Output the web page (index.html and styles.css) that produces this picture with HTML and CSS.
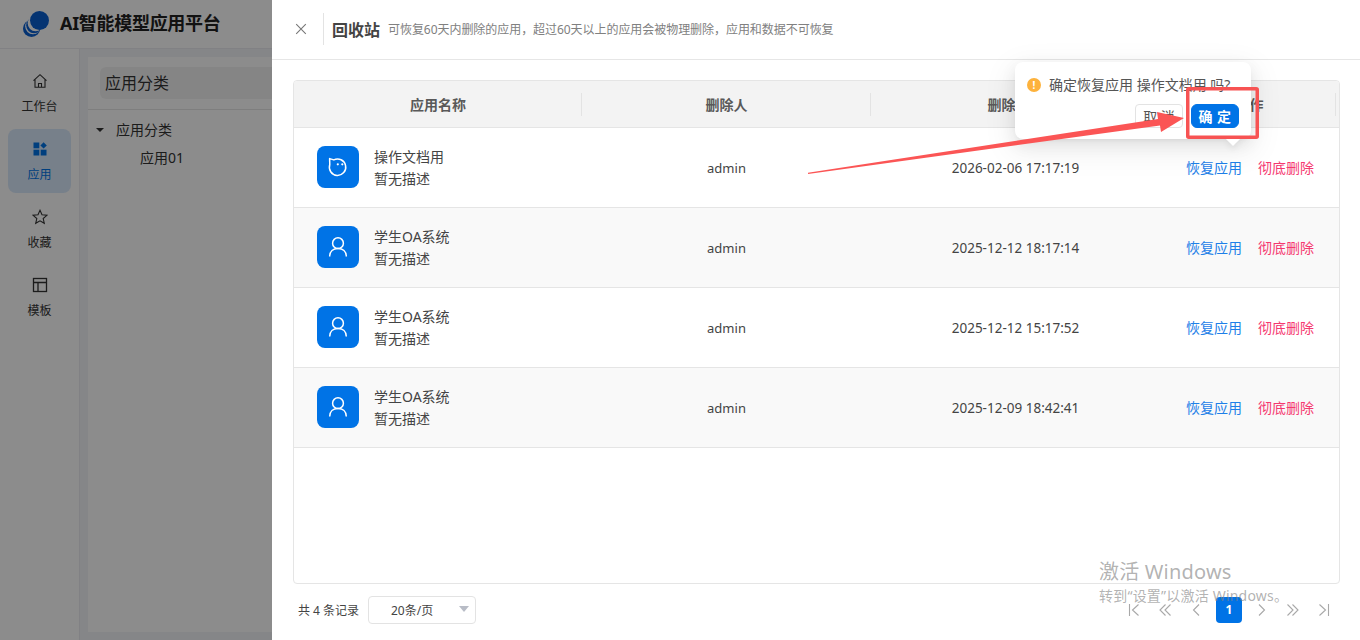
FILE: index.html
```html
<!DOCTYPE html>
<html lang="zh-CN">
<head>
<meta charset="utf-8">
<title>回收站</title>
<link rel="stylesheet" href="styles.css">
</head>
<body>
<div class="app">
  <header class="topbar">
    <svg class="logo" viewBox="0 0 26 26"><circle cx="8.500" cy="17.500" r="8.500" fill="#0a5fd0"/><circle cx="10" cy="15.500" r="7.800" fill="#fff"/><circle cx="11" cy="14.500" r="7.800" fill="#0a5fd0"/><circle cx="12.500" cy="12.500" r="7.800" fill="#fff"/><circle cx="16.500" cy="9.500" r="9.500" fill="#0a5fd0"/></svg>
    <span class="brand">AI智能模型应用平台</span>
  </header>
  <div class="body">
    <nav class="sidenav">
      <a class="navitem">
        <svg class="navicon" viewBox="0 0 16 16" fill="none" stroke="#333" stroke-width="1.1"><path d="M1.5 7.6 8 1.7l6.5 5.9M3 6.5v7.8h10V6.5M6.500 14.300v-3.800h3v3.800"/></svg>
        <span>工作台</span>
      </a>
      <a class="navitem active">
        <svg class="navicon" viewBox="0 0 16 16" fill="#0073e6"><rect x="1.5" y="1.5" width="5.8" height="5.8"/><path d="M11.6 1.2l3.2 3.2-3.2 3.2-3.2-3.2z"/><rect x="1.5" y="8.7" width="5.8" height="5.8"/><rect x="8.7" y="8.7" width="5.8" height="5.8"/></svg>
        <span>应用</span>
      </a>
      <a class="navitem">
        <svg class="navicon" viewBox="0 0 16 16" fill="none" stroke="#333" stroke-width="1.1"><path d="M8 1.3l2 4.5 4.9.5-3.7 3.2 1.100 4.800L8 11.800l-4.300 2.500 1.100-4.800L1.100 6.300 6 5.800z"/></svg>
        <span>收藏</span>
      </a>
      <a class="navitem">
        <svg class="navicon" viewBox="0 0 16 16" fill="none" stroke="#333" stroke-width="1.3"><rect x="1.5" y="1.5" width="13" height="13"/><path d="M1.5 5.5h13M6 5.5v9"/></svg>
        <span>模板</span>
      </a>
    </nav>
    <main class="content">
      <section class="card">
        <div class="cardhead"><div class="cardtitle">应用分类</div></div>
        <div class="tree">
          <div class="treenode"><i class="caret"></i>应用分类</div>
          <div class="treeleaf">应用01</div>
        </div>
      </section>
    </main>
  </div>
</div>

<div class="mask"></div>

<aside class="drawer">
  <div class="drawerhead">
    <svg class="close" viewBox="0 0 12 12" fill="none" stroke="#777" stroke-width="1.1"><path d="M1.2 1.2l9.6 9.6M10.8 1.2l-9.6 9.6"/></svg>
    <i class="vline"></i>
    <h2 class="title">回收站</h2>
    <span class="subtitle">可恢复60天内删除的应用，超过60天以上的应用会被物理删除，应用和数据不可恢复</span>
  </div>
  <div class="drawerbody">
    <div class="table">
      <div class="row head">
        <div class="cell"><span>应用名称</span></div>
        <div class="cell"><span>删除人</span></div>
        <div class="cell"><span>删除时间</span></div>
        <div class="cell last"><span>操作</span></div>
      </div>
      <div class="row">
        <div class="cell namecell">
          <span class="appicon"><svg viewBox="0 0 42 42" fill="none" stroke="#fff" stroke-width="1.5"><path d="M12.600 12.600l4.200 1.300a8.200 8.200 0 1 1-4 4.600z" stroke-linejoin="round"/><circle cx="20.800" cy="18.300" r="1.100" fill="#fff" stroke="none"/><circle cx="25.300" cy="18.300" r="1.100" fill="#fff" stroke="none"/></svg></span>
          <div class="appinfo"><div>操作文档用</div><div>暂无描述</div></div>
        </div>
        <div class="cell">admin</div>
        <div class="cell date">2026-02-06 17:17:19</div>
        <div class="cell actions"><a class="restore">恢复应用</a><a class="purge">彻底删除</a></div>
      </div>
      <div class="row alt">
        <div class="cell namecell">
          <span class="appicon"><svg viewBox="0 0 42 42" fill="none" stroke="#fff" stroke-width="1.5"><circle cx="21" cy="17.200" r="5.400"/><path d="M12.700 30.500c0-5 3.500-8 8.300-8s8.300 3 8.300 8"/></svg></span>
          <div class="appinfo"><div>学生OA系统</div><div>暂无描述</div></div>
        </div>
        <div class="cell">admin</div>
        <div class="cell date">2025-12-12 18:17:14</div>
        <div class="cell actions"><a class="restore">恢复应用</a><a class="purge">彻底删除</a></div>
      </div>
      <div class="row">
        <div class="cell namecell">
          <span class="appicon"><svg viewBox="0 0 42 42" fill="none" stroke="#fff" stroke-width="1.5"><circle cx="21" cy="17.200" r="5.400"/><path d="M12.700 30.500c0-5 3.500-8 8.300-8s8.300 3 8.300 8"/></svg></span>
          <div class="appinfo"><div>学生OA系统</div><div>暂无描述</div></div>
        </div>
        <div class="cell">admin</div>
        <div class="cell date">2025-12-12 15:17:52</div>
        <div class="cell actions"><a class="restore">恢复应用</a><a class="purge">彻底删除</a></div>
      </div>
      <div class="row alt">
        <div class="cell namecell">
          <span class="appicon"><svg viewBox="0 0 42 42" fill="none" stroke="#fff" stroke-width="1.5"><circle cx="21" cy="17.200" r="5.400"/><path d="M12.700 30.500c0-5 3.500-8 8.300-8s8.300 3 8.300 8"/></svg></span>
          <div class="appinfo"><div>学生OA系统</div><div>暂无描述</div></div>
        </div>
        <div class="cell">admin</div>
        <div class="cell date">2025-12-09 18:42:41</div>
        <div class="cell actions"><a class="restore">恢复应用</a><a class="purge">彻底删除</a></div>
      </div>
    </div>
    <div class="pager">
      <span class="total">共 4 条记录</span>
      <div class="select"><span>20条/页</span><i class="selectcaret"></i></div>
      <div class="pages">
        <svg class="pg" viewBox="0 0 14 14"><path d="M2.500 1v12M11.500 1.500 5.500 7l6 5.500"/></svg>
        <svg class="pg" viewBox="0 0 14 14"><path d="M7.500 1.500 2 7l5.500 5.500M12.500 1.500 7 7l5.500 5.500"/></svg>
        <svg class="pg" viewBox="0 0 14 14"><path d="M10 1.500 4.500 7l5.500 5.500"/></svg>
        <span class="pgnum">1</span>
        <svg class="pg" viewBox="0 0 14 14"><path d="M4 1.500 9.500 7 4 12.500"/></svg>
        <svg class="pg" viewBox="0 0 14 14"><path d="M1.500 1.500 7 7l-5.500 5.500M6.500 1.500 12 7l-5.500 5.500"/></svg>
        <svg class="pg" viewBox="0 0 14 14"><path d="M2.500 1.500 8.500 7l-6 5.500M11.500 1v12"/></svg>
      </div>
    </div>
  </div>
</aside>

<div class="popconfirm">
  <div class="popmsg"><i class="warn">!</i><span>确定恢复应用 操作文档用 吗?</span></div>
  <div class="popbtns"><button class="btn">取 消</button><button class="btn primary">确 定</button></div>
  <i class="poparrow"></i>
</div>

<svg class="annot" viewBox="0 0 1360 640">
  <polygon points="808,172.800 1158,119 1157,112 1184,118 1161,132 1160,125.500 808,174" fill="#fb5555"/>
  <rect x="1187.750" y="88.750" width="69.500" height="48.500" rx="1" fill="none" stroke="#f75353" stroke-width="3.500"/>
</svg>

<div class="watermark">
  <div class="wm1">激活 Windows</div>
  <div class="wm2">转到“设置”以激活 Windows。</div>
</div>
</body>
</html>
```
FILE: styles.css
```css
* { box-sizing: border-box; }
html, body { margin: 0; height: 640px; overflow: hidden; }
body {
  font-family: "Noto Sans", "Noto Sans CJK SC", sans-serif;
  font-size: 13px;
  color: #333;
  background: #fff;
  position: relative;
}
.app { height: 640px; display: flex; flex-direction: column; }
.topbar {
  height: 49px;
  flex: none;
  display: flex;
  align-items: center;
  padding-left: 23px;
  gap: 11px;
  background: #fff;
  border-bottom: 1px solid #ebebf0;
}
.logo { width: 26px; height: 26px; }
.brand { font-size: 18px; font-weight: 700; color: #222; letter-spacing: -.3px; line-height: 24px; margin-top: -3px; }
.body { flex: 1; display: flex; min-height: 0; }
.sidenav {
  width: 80px;
  flex: none;
  padding: 12px 8px 0;
  background: #fff;
  border-right: 1px solid #ebebf0;
  display: flex;
  flex-direction: column;
  gap: 4px;
}
.navitem {
  height: 64px;
  border-radius: 8px;
  display: flex;
  flex-direction: column;
  align-items: center;
  padding-top: 12px;
  gap: 10px;
  font-size: 12px;
  color: #333;
  line-height: 16px;
}
.navitem.active { background: #d9e9fb; color: #0073e6; }
.navicon { width: 16px; height: 16px; flex: none; }
.content { flex: 1; padding: 8px 0 8px 8px; background: #f3f5f8; }
.card { height: 100%; background: #fff; }
.cardhead { height: 53px; padding: 10px 12px; border-bottom: 1px solid #e5e5e5; }
.cardtitle {
  height: 32px;
  padding-left: 5px;
  background: #f3f3f3;
  border-radius: 6px;
  font-size: 16px;
  line-height: 32px;
}
.tree { padding: 6px 0 0 8px; font-size: 14px; color: #333; }
.treenode { height: 28px; line-height: 26px; display: flex; align-items: center; gap: 12px; }
.treeleaf { height: 28px; line-height: 28px; padding-left: 44px; }
.caret { width: 0; height: 0; border: 4px solid transparent; border-top: 4px solid #333; border-bottom: 0; }

.mask { position: absolute; inset: 0; background: rgba(0, 0, 0, .45); }

.drawer {
  position: absolute;
  top: 0;
  bottom: 0;
  left: 272px;
  right: 0;
  background: #fff;
  display: flex;
  flex-direction: column;
}
.drawerhead {
  height: 60px;
  flex: none;
  display: flex;
  align-items: center;
  padding-left: 23px;
  border-bottom: 1px solid #e6e6e6;
}
.close { width: 12px; height: 12px; margin-top: -2px; }
.vline { width: 1px; height: 32px; margin: -2px 0 0 16px; background: #e3e3e3; }
.title { margin: -2px 0 0 8px; font-size: 16px; font-weight: 700; color: #444; }
.subtitle { margin-left: 8px; font-size: 12px; color: #808080; line-height: 16px; letter-spacing: -.05px; }
.drawerbody { flex: 1; display: flex; flex-direction: column; padding: 20px 20px 0 21px; min-height: 0; }
.table {
  height: 504px;
  flex: none;
  border: 1px solid #e5e5e5;
  border-radius: 4px;
  overflow: hidden;
}
.row {
  display: grid;
  grid-template-columns: 288px 289px 289px 1fr;
  height: 80px;
  border-bottom: 1px solid #e5e5e5;
  background: #fff;
}
.row.alt { background: #f9f9f9; }
.row.head { height: 47px; background: #f3f3f3; font-size: 14px; font-weight: 700; }
.cell { display: flex; align-items: center; justify-content: center; color: #444; }
.date { font-size: 13.5px; }
.head .cell { color: #595959; position: relative; padding-bottom: 1px; }
.head .cell::after {
  content: "";
  position: absolute;
  right: 0;
  top: 12px;
  bottom: 11px;
  width: 1px;
  background: #e3e3e3;
}
.head .cell.last::after { right: 3px; }
.namecell { justify-content: flex-start; padding: 0 0 1px 23px; gap: 15px; }
.appicon { width: 42px; height: 42px; border-radius: 8px; background: #0073e6; flex: none; }
.appicon svg { display: block; width: 42px; height: 42px; }
.appinfo { font-size: 14px; line-height: 22px; color: #444; padding-top: 2px; }
.actions { justify-content: flex-start; padding: 0 0 1px 26px; gap: 16px; font-size: 14px; }
.restore { color: #1e80e8; }
.purge { color: #f5386f; }

.pager { flex: 1; display: flex; align-items: center; padding: 0 5px 4px 5px; font-size: 12px; color: #444; }
.select {
  width: 108px;
  height: 28px;
  margin-left: 9px;
  border: 1px solid #e3e3e3;
  border-radius: 4px;
  display: flex;
  align-items: center;
  justify-content: center;
  padding-right: 20px;
  position: relative;
}
.selectcaret {
  position: absolute;
  right: 6px;
  top: 9px;
  width: 0;
  height: 0;
  border: 5px solid transparent;
  border-top: 6px solid #b8bcc6;
  border-bottom: 0;
}
.pages { margin-left: auto; display: flex; align-items: center; gap: 17px; padding-right: 4px; }
.pg { width: 14px; height: 14px; fill: none; stroke: #a8a8a8; stroke-width: 1.1; }
.pgnum {
  width: 26px;
  height: 26px;
  margin: 0 -4px;
  border-radius: 4px;
  background: #0073e6;
  color: #fff;
  font-weight: 700;
  text-align: center;
  line-height: 26px;
}

.popconfirm {
  position: absolute;
  left: 1015px;
  top: 62px;
  width: 236px;
  height: 77px;
  background: #fff;
  border-radius: 8px;
  box-shadow: 0 6px 16px rgba(0, 0, 0, .08), 0 3px 6px -4px rgba(0, 0, 0, .12), 0 9px 28px 8px rgba(0, 0, 0, .05);
  padding: 12px 12px 0 12px;
}
.popmsg { display: flex; align-items: center; gap: 8px; font-size: 14px; color: #555; line-height: 22px; }
.warn {
  width: 14px;
  height: 14px;
  border-radius: 50%;
  background: #fdb23c;
  color: #fff;
  font-style: normal;
  font-size: 10px;
  font-weight: 700;
  line-height: 14px;
  text-align: center;
}
.popbtns { display: flex; justify-content: flex-end; gap: 8px; margin-top: 8px; }
.btn {
  height: 24px;
  width: 48px;
  padding: 0;
  border: 1px solid #e3e3e3;
  border-radius: 4px;
  background: #fff;
  color: #555;
  font: 14px "Noto Sans", "Noto Sans CJK SC", sans-serif;
}
.btn.primary { background: #0073e6; border-color: #0073e6; color: #fff; font-weight: 700; letter-spacing: .5px; border-radius: 6px; }
.poparrow {
  position: absolute;
  left: 213px;
  top: 72px;
  width: 10px;
  height: 10px;
  background: #fff;
  transform: rotate(45deg);
  box-shadow: 3px 3px 6px rgba(0, 0, 0, .06);
}
.annot { position: absolute; left: 0; top: 0; width: 1360px; height: 640px; pointer-events: none; }
.watermark { position: absolute; left: 1099px; top: 558px; color: rgba(130, 130, 130, .62); pointer-events: none; }
.wm1 { font-size: 20px; line-height: 27px; letter-spacing: .2px; }
.wm2 { font-size: 14px; line-height: 20px; margin-top: 1px; white-space: nowrap; letter-spacing: .2px; }
```
